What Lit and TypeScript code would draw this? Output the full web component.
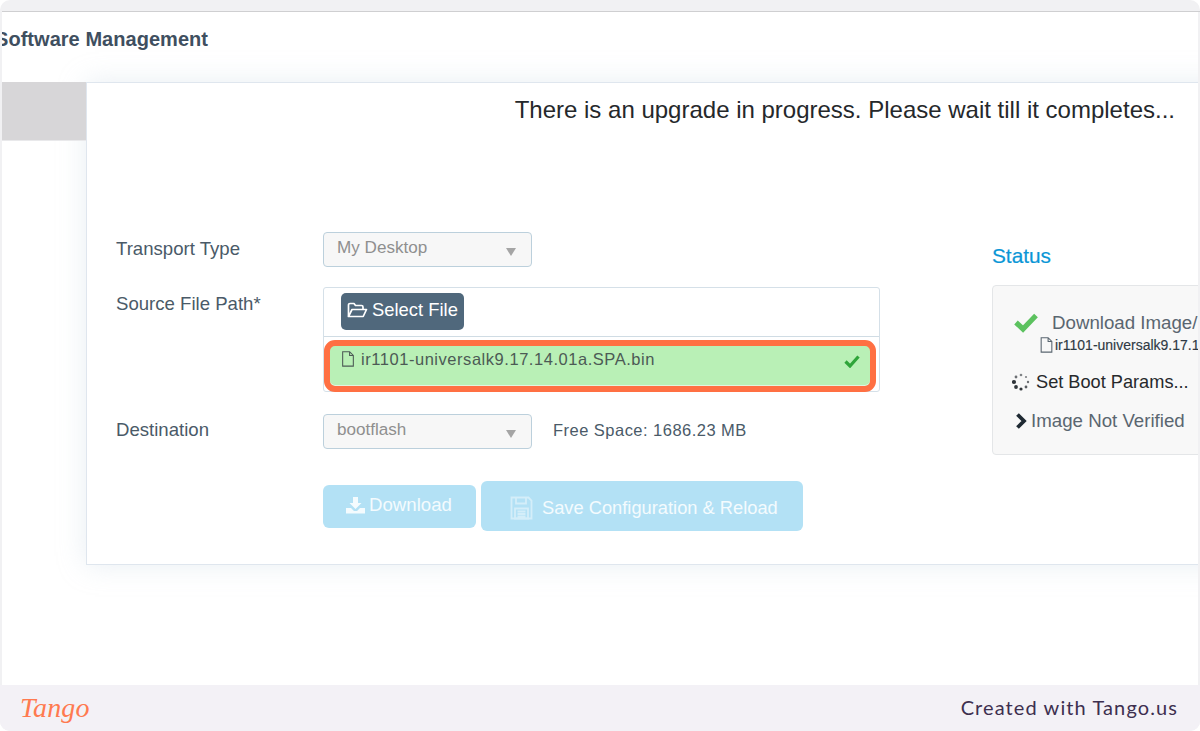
import { LitElement, html, css } from "lit";
import { customElement } from "lit/decorators.js";

const fileIcon = html`<svg class="file" viewBox="0 0 12 15" fill="none" stroke="currentColor" stroke-width="1">
  <path d="M1 .7h6.5L11 4.2v10H1zM7.5.7v3.500H11" />
</svg>`;

@customElement("app-root")
export class AppRoot extends LitElement {
  static styles = css`
    :host {
      display: block;
      width: 1200px;
      height: 731px;
      font-family: "Liberation Sans", Arial, sans-serif;
      background: #fff;
    }
    .frame {
      width: 1200px;
      height: 731px;
      display: flex;
      flex-direction: column;
      overflow: hidden;
      background: #f1f1f3;
      border-radius: 10px;
    }
    .topbar {
      height: 11px;
      flex: none;
      border-bottom: 1px solid #cfcfd1;
      margin-left: 2px;
    }
    .main {
      flex: 1;
      min-height: 0;
      margin-left: 2px;
      margin-right: 2px;
      background: #fff;
      overflow: hidden;
    }
    .title {
      height: 70px;
      box-sizing: border-box;
      padding-top: 14px;
      margin-left: -7px;
      font-size: 20px;
      line-height: 26px;
      font-weight: 700;
      letter-spacing: 0.04px;
      color: #3f4f60;
      white-space: nowrap;
    }
    .content {
      display: flex;
      align-items: flex-start;
    }
    .side {
      width: 84px;
      flex: none;
      height: 482px;
    }
    .side-item {
      position: relative;
      z-index: 1;
      height: 59px;
      background: #d7d6d8;
      border-bottom: 1px solid #e9e9eb;
      box-sizing: border-box;
    }
    .card {
      box-sizing: border-box;
      width: 1140px;
      flex: none;
      height: 483px;
      background: #fff;
      border: 1px solid #dfe6ee;
      padding: 11px 0 0 29px;
      box-shadow: 0 0 26px rgba(190, 205, 220, 0.35);
    }
    .notice {
      width: 1059px;
      text-align: right;
      font-size: 24px;
      line-height: 32px;
      color: #25282b;
      white-space: nowrap;
    }
    .body {
      display: flex;
      margin-top: 106px;
    }
    .form {
      width: 876px;
      flex: none;
      color: #4a5a68;
      font-size: 18.6px;
    }
    .row {
      display: flex;
      align-items: flex-start;
    }
    .label {
      width: 207px;
      flex: none;
      line-height: 34px;
    }
    .source-row .label {
      line-height: 34px;
    }
    .dest-row .label {
      line-height: 32px;
    }
    .select {
      box-sizing: border-box;
      width: 209px;
      height: 35px;
      border: 1px solid #bcd0dc;
      border-radius: 4px;
      background: #f7f7f7;
      color: #8f8f8f;
      font-size: 17.1px;
      line-height: 29px;
      padding-left: 13px;
      position: relative;
    }
    .caret {
      position: absolute;
      right: 15px;
      top: 15px;
      border-left: 5.5px solid transparent;
      border-right: 5.5px solid transparent;
      border-top: 8px solid #a5a5a5;
    }
    .source-row {
      margin-top: 20px;
    }
    .source {
      box-sizing: border-box;
      width: 557px;
      height: 105px;
      border: 1px solid #d5e0e8;
      border-radius: 3px;
    }
    .source-top {
      height: 49px;
      box-sizing: border-box;
      padding: 5px 0 0 17px;
      border-bottom: 1px solid #d0dce4;
    }
    .select-btn {
      display: inline-flex;
      align-items: center;
      gap: 4px;
      box-sizing: border-box;
      height: 37px;
      padding: 0 6px 3px;
      background: #50687c;
      border-radius: 5px;
      color: #fff;
      font-size: 18.4px;
    }
    .select-btn svg {
      width: 21px;
      height: 17px;
    }
    .file-item {
      box-sizing: border-box;
      margin: 3px 3px 0 0;
      height: 52px;
      border: 6px solid #ff7043;
      border-radius: 11px;
      background: #b9f0b6;
      box-shadow: inset 0 -1px 0 #e2f5df;
      display: flex;
      align-items: flex-start;
      padding: 3px 10px 0 11px;
      color: #4c5a55;
      font-size: 16.5px;
      line-height: 21px;
      letter-spacing: 0.54px;
    }
    .file {
      width: 14px;
      height: 16px;
      flex: none;
      margin: 2px 6px 0 0;
      color: #4c5a55;
    }
    .tick {
      margin-left: auto;
      width: 16px;
      height: 14px;
      margin-top: 5px;
    }
    .dest-row {
      margin-top: 22px;
    }
    .free {
      margin-left: 21px;
      font-size: 16.5px;
      line-height: 32px;
      letter-spacing: 0.47px;
    }
    .actions {
      display: flex;
      align-items: center;
      gap: 5px;
      margin: 32px 0 0 207px;
      color: #fff;
    }
    .btn {
      box-sizing: border-box;
      display: flex;
      align-items: center;
      background: #b3e1f5;
      border-radius: 6px;
      color: #f4fbfe;
    }
    .btn-dl {
      width: 153px;
      height: 43px;
      padding: 0 0 3px 23px;
      gap: 4px;
      font-size: 18.65px;
    }
    .btn-save {
      width: 322px;
      height: 50px;
      padding: 3px 0 0 29px;
      gap: 9px;
      font-size: 18.3px;
    }
    .status {
      flex: none;
      width: 300px;
      margin-top: 10px;
    }
    .status h3 {
      margin: 0;
      font-size: 20.8px;
      font-weight: 400;
      line-height: 28px;
      color: #0a96d6;
      -webkit-text-stroke: 0.2px #0a96d6;
    }
    .panel {
      box-sizing: border-box;
      margin-top: 15px;
      height: 170px;
      border: 1px solid #e4e6e8;
      border-radius: 4px;
      background: #f8f8f8;
      padding: 23px 0 0 19px;
      font-size: 18.7px;
      color: #5a6670;
    }
    .st-line {
      display: flex;
      align-items: center;
      white-space: nowrap;
    }
    .st-dl {
      height: 28px;
      gap: 14px;
      margin-left: 2px;
    }
    .st-file {
      height: 18px;
      margin: -1px 0 0 28px;
      font-size: 14px;
      color: #2f3a44;
      -webkit-text-stroke: 0.15px #2f3a44;
    }
    .st-file .file {
      width: 13px;
      margin: 0 2px 0 0;
      color: #5a6670;
    }
    .st-boot {
      height: 24px;
      margin: 16px 0 0 0;
      gap: 6px;
      color: #26292c;
      font-size: 18.2px;
    }
    .st-img {
      height: 24px;
      margin: 15px 0 0 3px;
      gap: 4px;
    }
    .footer {
      flex: none;
      height: 46px;
      background: #f3f1f6;
      display: flex;
      align-items: center;
      justify-content: space-between;
      padding: 0 22px 0 20px;
    }
    .logo {
      font-family: "Liberation Serif", serif;
      font-style: italic;
      font-size: 28px;
      color: #ff7a50;
      letter-spacing: 0.1px;
      line-height: 40px;
    }
    .credit {
      font-family: Lato, sans-serif;
      font-size: 20px;
      letter-spacing: 1.1px;
      color: #3d2f4f;
      padding-bottom: 2px;
    }
  `;

  render() {
    return html`
      <div class="frame">
        <div class="topbar"></div>
        <div class="main">
          <div class="title">Software Management</div>
          <div class="content">
            <div class="side"><div class="side-item"></div></div>
            <div class="card">
              <div class="notice">There is an upgrade in progress. Please wait till it completes...</div>
              <div class="body">
                <div class="form">
                  <div class="row">
                    <div class="label">Transport Type</div>
                    <div class="select">My Desktop<span class="caret"></span></div>
                  </div>
                  <div class="row source-row">
                    <div class="label">Source File Path*</div>
                    <div class="source">
                      <div class="source-top">
                        <div class="select-btn">
                          <svg viewBox="0 0 21 17" fill="none" stroke="#fff" stroke-width="1.7" stroke-linejoin="round">
                            <path d="M1.500 14.500V3a1.500 1.500 0 0 1 1.500-1.500h4l1.500 2h6a1.500 1.500 0 0 1 1.500 1.500v2" />
                            <path d="M1.500 14.500 5 7.500h14.500l-3.300 7z" />
                          </svg>
                          Select File
                        </div>
                      </div>
                      <div class="file-item">
                        ${fileIcon}
                        <span>ir1101-universalk9.17.14.01a.SPA.bin</span>
                        <svg class="tick" viewBox="0 0 16 14">
                          <path d="M1.500 7.500 6 12l8.500-9.500" fill="none" stroke="#2fa53a" stroke-width="3.200" />
                        </svg>
                      </div>
                    </div>
                  </div>
                  <div class="row dest-row">
                    <div class="label">Destination</div>
                    <div class="select">bootflash<span class="caret"></span></div>
                    <div class="free">Free Space: 1686.23 MB</div>
                  </div>
                  <div class="actions">
                    <div class="btn btn-dl">
                      <svg width="19" height="18" viewBox="0 0 19 18" fill="#f4fbfe">
                        <path d="M7 1h5v6h3.500L9.500 13 3.500 7H7z" />
                        <path d="M0 12h5l3 3h3l3-3h5v5.500H0z" />
                      </svg>
                      Download
                    </div>
                    <div class="btn btn-save">
                      <svg width="23" height="24" viewBox="0 0 23 24" fill="none" stroke="#d4eef9" stroke-width="1.800">
                        <path d="M1.500 1.500h17l3 3v18h-20z" />
                        <path d="M6 1.500v6h10v-6M5 12.500h13v10H5zM7.500 15.500h8M7.500 18h8M7.500 20.500h8" />
                      </svg>
                      Save Configuration &amp; Reload
                    </div>
                  </div>
                </div>
                <div class="status">
                  <h3>Status</h3>
                  <div class="panel">
                    <div class="st-line st-dl">
                      <svg width="24" height="20" viewBox="0 0 24 20">
                        <path d="M2 9.500l7 6.500L22 2.500" fill="none" stroke="#5cc25f" stroke-width="5.200" />
                      </svg>
                      <span>Download Image/</span>
                    </div>
                    <div class="st-line st-file">${fileIcon}<span>ir1101-universalk9.17.14.01a.SPA.bin</span></div>
                    <div class="st-line st-boot">
                      <svg width="18" height="18" viewBox="0 0 18 18" fill="#30353a">
                        <circle cx="9" cy="2" r="1.300" opacity=".6" />
                        <circle cx="14" cy="4" r="1.100" opacity=".6" />
                        <circle cx="16" cy="9" r="1.200" opacity=".7" />
                        <circle cx="14" cy="14" r="1.400" opacity=".8" />
                        <circle cx="9" cy="16" r="1.600" />
                        <circle cx="4" cy="14" r="1.900" />
                        <circle cx="2" cy="9" r="2.100" />
                        <circle cx="4" cy="4" r="1.400" opacity=".7" />
                      </svg>
                      <span>Set Boot Params...</span>
                    </div>
                    <div class="st-line st-img">
                      <svg width="12" height="18" viewBox="0 0 12 18">
                        <path d="M2.500 2.500l6.500 6.500-6.500 6.500" fill="none" stroke="#1f2a33" stroke-width="3.800" />
                      </svg>
                      <span>Image Not Verified</span>
                    </div>
                  </div>
                </div>
              </div>
            </div>
          </div>
        </div>
        <div class="footer">
          <div class="logo">Tango</div>
          <div class="credit">Created with Tango.us</div>
        </div>
      </div>
    `;
  }
}
